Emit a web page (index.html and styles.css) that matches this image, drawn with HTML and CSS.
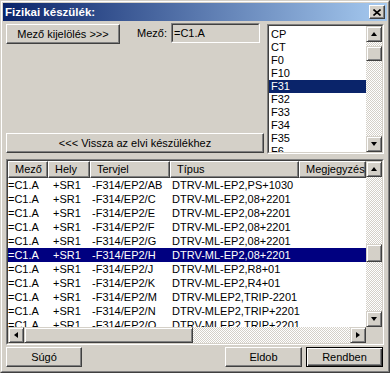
FILE: index.html
```html
<!DOCTYPE html>
<html>
<head>
	<title>Fizikai készülék</title>
	<meta charset="utf-8">
	<link rel="stylesheet" href="styles.css">
</head>
<body>
	<div class="window">
	<div class="window-inner">
		<div class="titlebar">
			<span class="title">Fizikai készülék:</span>
			<span class="caption-btn">
				<svg width="8" height="7" viewBox="0 0 8 7"><path d="M0.5 0.5L7.5 6.5M7.5 0.5L0.5 6.5" stroke="#000" stroke-width="1.6" fill="none"/></svg>
			</span>
		</div>

		<div class="content">
			<div class="top">
				<div class="left">
					<div class="field-row">
						<button class="btn btn-select">Mező kijelölés &gt;&gt;&gt;</button>
						<span class="field-label">Mező:</span>
						<div class="field"><div class="field-inner">=C1.A</div></div>
					</div>
					<button class="btn btn-back">&lt;&lt;&lt; Vissza az elvi készülékhez</button>
				</div>

				<div class="listbox">
					<div class="listbox-inner">
						<ul class="list-items">
							<li>CP</li>
							<li>CT</li>
							<li>F0</li>
							<li>F10</li>
							<li class="selected">F31</li>
							<li>F32</li>
							<li>F33</li>
							<li>F34</li>
							<li>F35</li>
							<li>F6</li>
						</ul>
						<div class="vscroll">
							<div class="sbtn"><span class="arrow-up"></span></div>
							<div class="track"><div class="thumb thumb-list"></div></div>
							<div class="sbtn"><span class="arrow-down"></span></div>
						</div>
					</div>
				</div>
			</div>

			<div class="grid">
				<div class="grid-inner">
					<div class="grid-main">
						<div class="grid-view">
							<div class="grid-head">
								<div class="hcell">Mező</div>
								<div class="hcell">Hely</div>
								<div class="hcell">Tervjel</div>
								<div class="hcell">Típus</div>
								<div class="hcell">Megjegyzés</div>
							</div>
							<div class="row"><span>=C1.A</span><span>+SR1</span><span>-F314/EP2/AB</span><span>DTRV-ML-EP2,PS+1030</span></div>
							<div class="row"><span>=C1.A</span><span>+SR1</span><span>-F314/EP2/C</span><span>DTRV-ML-EP2,08+2201</span></div>
							<div class="row"><span>=C1.A</span><span>+SR1</span><span>-F314/EP2/E</span><span>DTRV-ML-EP2,08+2201</span></div>
							<div class="row"><span>=C1.A</span><span>+SR1</span><span>-F314/EP2/F</span><span>DTRV-ML-EP2,08+2201</span></div>
							<div class="row"><span>=C1.A</span><span>+SR1</span><span>-F314/EP2/G</span><span>DTRV-ML-EP2,08+2201</span></div>
							<div class="row selected"><span>=C1.A</span><span>+SR1</span><span>-F314/EP2/H</span><span>DTRV-ML-EP2,08+2201</span></div>
							<div class="row"><span>=C1.A</span><span>+SR1</span><span>-F314/EP2/J</span><span>DTRV-ML-EP2,R8+01</span></div>
							<div class="row"><span>=C1.A</span><span>+SR1</span><span>-F314/EP2/K</span><span>DTRV-ML-EP2,R4+01</span></div>
							<div class="row"><span>=C1.A</span><span>+SR1</span><span>-F314/EP2/M</span><span>DTRV-MLEP2,TRIP-2201</span></div>
							<div class="row"><span>=C1.A</span><span>+SR1</span><span>-F314/EP2/N</span><span>DTRV-MLEP2,TRIP+2201</span></div>
							<div class="row"><span>=C1.A</span><span>+SR1</span><span>-F314/EP2/O</span><span>DTRV-MLEP2,TRIP+2201</span></div>
						</div>
						<div class="vscroll">
							<div class="sbtn"><span class="arrow-up"></span></div>
							<div class="track"><div class="thumb thumb-grid"></div></div>
							<div class="sbtn"><span class="arrow-down"></span></div>
						</div>
					</div>
					<div class="hscroll-row">
						<div class="hscroll">
							<div class="sbtn"><span class="arrow-left"></span></div>
							<div class="thumb thumb-h"></div>
							<div class="track"></div>
							<div class="sbtn"><span class="arrow-right"></span></div>
						</div>
						<div class="corner"></div>
					</div>
				</div>
			</div>

			<div class="footer">
				<button class="btn btn-help">Súgó</button>
				<button class="btn btn-cancel">Eldob</button>
				<button class="btn btn-ok">Rendben</button>
			</div>
		</div>
	</div>
	</div>
</body>
</html>
```

FILE: styles.css
```css
* {
	box-sizing: border-box;
}

body {
	margin: 0;
	background-color: #d4d0c8;
	font-family: "Liberation Sans", Arial, sans-serif;
	font-size: 11px;
	color: #000;
}

.window {
	width: 390px;
	height: 373px;
	border: 1px solid;
	border-color: #d4d0c8 #404040 #404040 #d4d0c8;
	background-color: #d4d0c8;
}

.window-inner {
	height: 100%;
	border: 1px solid;
	border-color: #fff #808080 #808080 #fff;
	padding: 1px;
	display: flex;
	flex-direction: column;
}

.titlebar {
	flex: none;
	height: 18px;
	display: flex;
	align-items: center;
	justify-content: space-between;
	padding: 0 2px 0 2px;
	background: linear-gradient(to right, #0a246a, #a6caf0);
}

.title {
	color: #fff;
	font-weight: bold;
	font-size: 11.5px;
}

.caption-btn {
	width: 16px;
	height: 14px;
	display: flex;
	align-items: center;
	justify-content: center;
	background-color: #d4d0c8;
	border: 1px solid;
	border-color: #fff #404040 #404040 #fff;
	box-shadow: inset -1px -1px #808080;
}

.content {
	flex: 1;
	padding: 2px 3px 0;
	display: flex;
	flex-direction: column;
}

/* buttons */
.btn {
	font-family: inherit;
	font-size: 11px;
	color: #000;
	background-color: #d4d0c8;
	border: 1px solid;
	border-color: #fff #404040 #404040 #fff;
	box-shadow: inset -1px -1px #808080;
	height: 20px;
	padding: 0;
	margin: 0;
}

.btn-ok {
	border-color: #000;
	box-shadow: inset 1px 1px #fff, inset -1px -1px #404040, inset -2px -2px #808080;
}

/* top area */
.top {
	flex: none;
	height: 131px;
	display: flex;
	gap: 3px;
}

.left {
	width: 258px;
	display: flex;
	flex-direction: column;
	justify-content: space-between;
	padding-bottom: 1px;
}

.field-row {
	display: flex;
	align-items: flex-start;
}

.btn-select {
	width: 114px;
	margin-top: 1px;
}

.field-label {
	width: 34px;
	margin-left: 17px;
	line-height: 20px;
}

.field {
	width: 89px;
	height: 20px;
	border: 1px solid;
	border-color: #808080 #fff #fff #808080;
}

.field-inner {
	height: 100%;
	border: 1px solid;
	border-color: #404040 #d4d0c8 #d4d0c8 #404040;
	padding-left: 1px;
	line-height: 16px;
}

.btn-back {
	width: 258px;
}

.listbox {
	width: 117px;
	height: 130px;
	margin-top: 1px;
	border: 1px solid;
	border-color: #808080 #fff #fff #808080;
}

.listbox-inner {
	height: 100%;
	display: flex;
	border: 1px solid;
	border-color: #404040 #d4d0c8 #d4d0c8 #404040;
	background-color: #fff;
}

.list-items {
	flex: 1;
	list-style: none;
	margin: 0;
	padding: 2px 0 0;
	overflow: hidden;
}

.list-items li {
	height: 13px;
	line-height: 13px;
	padding-left: 2px;
}

.list-items li.selected {
	background-color: #0a246a;
	color: #fff;
}

/* scrollbars */
.vscroll {
	width: 16px;
	flex: none;
	display: flex;
	flex-direction: column;
}

.track {
	flex: 1;
	background: repeating-conic-gradient(#fff 0 25%, #d4d0c8 0 50%) 0 0 / 2px 2px;
}

.sbtn, .thumb {
	background-color: #d4d0c8;
	border: 1px solid;
	border-color: #d4d0c8 #404040 #404040 #d4d0c8;
	box-shadow: inset 1px 1px #fff, inset -1px -1px #808080;
}

.sbtn {
	width: 16px;
	height: 16px;
	flex: none;
	display: flex;
	align-items: center;
	justify-content: center;
}

.thumb-list {
	height: 15px;
	margin-top: 4px;
}

.thumb-grid {
	height: 18px;
	margin-top: 67px;
}

.arrow-up, .arrow-down {
	width: 1px;
	height: 0;
	border-left: 3px solid transparent;
	border-right: 3px solid transparent;
}

.arrow-up {
	border-bottom: 4px solid #000;
}

.arrow-down {
	border-top: 4px solid #000;
}

.arrow-left, .arrow-right {
	width: 0;
	height: 1px;
	border-top: 3px solid transparent;
	border-bottom: 3px solid transparent;
}

.arrow-left {
	border-right: 4px solid #000;
}

.arrow-right {
	border-left: 4px solid #000;
}

/* grid */
.grid {
	flex: none;
	height: 186px;
	margin-top: 5px;
	border: 1px solid;
	border-color: #808080 #fff #fff #808080;
}

.grid-inner {
	height: 100%;
	display: flex;
	flex-direction: column;
	border: 1px solid;
	border-color: #404040 #d4d0c8 #d4d0c8 #404040;
}

.grid-main {
	height: 166px;
	display: flex;
}

.grid-view {
	width: 358px;
	overflow: hidden;
	background-color: #fff;
}

.grid-head {
	display: grid;
	grid-template-columns: 40px 42px 80px 129px 67px;
	height: 17px;
}

.hcell {
	background-color: #d4d0c8;
	border: 1px solid;
	border-color: #fff #404040 #404040 #fff;
	box-shadow: inset -1px -1px #808080;
	padding-left: 6px;
	line-height: 15px;
	white-space: nowrap;
	overflow: hidden;
}

.row {
	display: grid;
	grid-template-columns: 45px 39px 80px 1fr;
	height: 14px;
	line-height: 14px;
	white-space: nowrap;
}

.row.selected {
	background-color: #000080;
	color: #fff;
}

.hscroll-row {
	height: 16px;
	display: flex;
}

.hscroll {
	width: 358px;
	display: flex;
}

.thumb-h {
	width: 169px;
	height: 16px;
}

.corner {
	width: 16px;
	background-color: #d4d0c8;
}

/* footer */
.footer {
	flex: none;
	margin-top: 2px;
	display: flex;
	gap: 4px;
	padding-right: 1px;
}

.btn-help {
	width: 76px;
}

.btn-cancel {
	width: 77px;
	margin-left: auto;
}

.btn-ok {
	width: 77px;
}
```
